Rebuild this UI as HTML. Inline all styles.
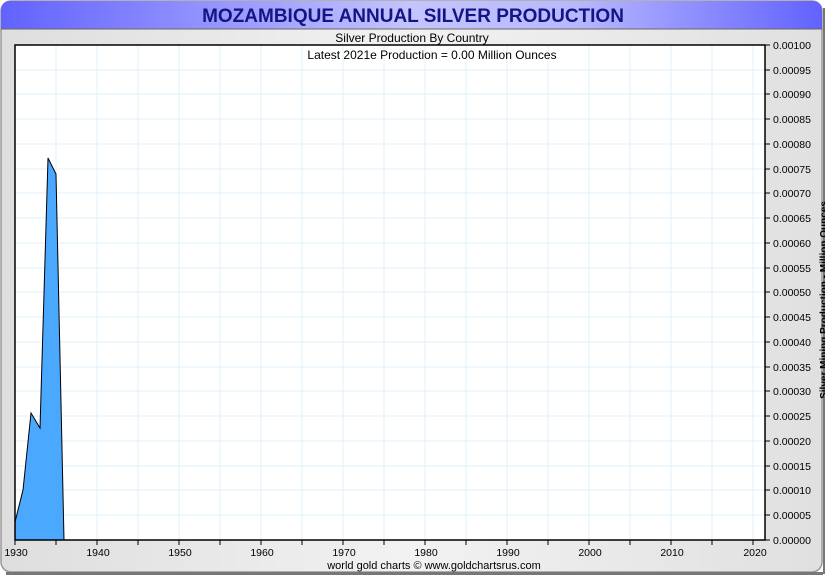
<!DOCTYPE html><html><head><meta charset="utf-8"><style>body{margin:0;background:#fff}svg{display:block;font-family:"Liberation Sans",sans-serif}</style></head><body>
<svg width="825" height="575" viewBox="0 0 825 575">
<defs>
<linearGradient id="t" x1="0" x2="1"><stop offset="0" stop-color="#6262ff"/><stop offset="0.5" stop-color="#c4c4ff"/><stop offset="0.7" stop-color="#b8b8ff"/><stop offset="1" stop-color="#6262ff"/></linearGradient>
<linearGradient id="b" x1="0" x2="1"><stop offset="0" stop-color="#dedede"/><stop offset="0.5" stop-color="#f2f2f2"/><stop offset="1" stop-color="#e0e0e0"/></linearGradient>
</defs>
<rect x="1" y="1" width="821" height="571" rx="10" fill="url(#b)" stroke="#999" stroke-width="1.5"/>
<rect x="823" y="8" width="2" height="566" fill="#777"/>
<rect x="6" y="572" width="817" height="3" fill="#777"/>
<path d="M1 29 V11 Q1 1 11 1 H812 Q822 1 822 11 V29 Z" fill="url(#t)"/>
<line x1="1" y1="29" x2="822" y2="29" stroke="#666"/>
<text x="413" y="22" text-anchor="middle" font-size="19" font-weight="bold" fill="#141484">MOZAMBIQUE ANNUAL SILVER PRODUCTION</text>
<rect x="15" y="45" width="750" height="495" fill="#fff"/>
<g stroke="#dff0f8" stroke-width="1">
<path d="M56 45V540M97 45V540M138 45V540M179 45V540M220 45V540M261 45V540M302 45V540M343 45V540M384 45V540M425 45V540M466 45V540M507 45V540M548 45V540M589 45V540M630 45V540M671 45V540M712 45V540M753 45V540"/>
<path d="M15 70H765M15 94H765M15 119H765M15 144H765M15 169H765M15 193H765M15 218H765M15 243H765M15 268H765M15 292H765M15 317H765M15 342H765M15 367H765M15 391H765M15 416H765M15 441H765M15 466H765M15 490H765M15 515H765"/>
</g>
<polygon points="15,540 15,522 23,490 31,413 40,428 48,158 56,174 64,540" fill="#4aa8ff" stroke="#000" stroke-width="1"/>
<rect x="15" y="45" width="750" height="495" fill="none" stroke="#000" stroke-width="1.5"/>
<text x="412" y="42" text-anchor="middle" font-size="12">Silver Production By Country</text>
<text x="432" y="59" text-anchor="middle" font-size="12">Latest 2021e Production = 0.00 Million Ounces</text>
<g stroke="#000" stroke-width="1">
<path d="M765 45h5M765 70h5M765 94h5M765 119h5M765 144h5M765 169h5M765 193h5M765 218h5M765 243h5M765 268h5M765 292h5M765 317h5M765 342h5M765 367h5M765 391h5M765 416h5M765 441h5M765 466h5M765 490h5M765 515h5M765 540h5"/>
<path d="M15 540v5M56 540v5M97 540v5M138 540v5M179 540v5M220 540v5M261 540v5M302 540v5M343 540v5M384 540v5M425 540v5M466 540v5M507 540v5M548 540v5M589 540v5M630 540v5M671 540v5M712 540v5M753 540v5"/>
</g>
<g font-size="10.5" fill="#000">
<text x="773" y="49">0.00100</text><text x="773" y="74">0.00095</text><text x="773" y="98">0.00090</text><text x="773" y="123">0.00085</text><text x="773" y="148">0.00080</text><text x="773" y="173">0.00075</text><text x="773" y="197">0.00070</text><text x="773" y="222">0.00065</text><text x="773" y="247">0.00060</text><text x="773" y="272">0.00055</text><text x="773" y="296">0.00050</text><text x="773" y="321">0.00045</text><text x="773" y="346">0.00040</text><text x="773" y="371">0.00035</text><text x="773" y="395">0.00030</text><text x="773" y="420">0.00025</text><text x="773" y="445">0.00020</text><text x="773" y="470">0.00015</text><text x="773" y="494">0.00010</text><text x="773" y="519">0.00005</text><text x="773" y="544">0.00000</text>
</g>
<g font-size="10.5" text-anchor="middle">
<text x="16" y="556">1930</text><text x="98" y="556">1940</text><text x="180" y="556">1950</text><text x="262" y="556">1960</text><text x="344" y="556">1970</text><text x="426" y="556">1980</text><text x="508" y="556">1990</text><text x="590" y="556">2000</text><text x="672" y="556">2010</text><text x="755" y="556">2020</text>
</g>
<text x="434" y="569" text-anchor="middle" font-size="11">world gold charts © www.goldchartsrus.com</text>
<text transform="translate(827,300) rotate(-90)" text-anchor="middle" font-size="10" font-weight="bold">Silver Mining Production - Million Ounces</text>
</svg></body></html>
